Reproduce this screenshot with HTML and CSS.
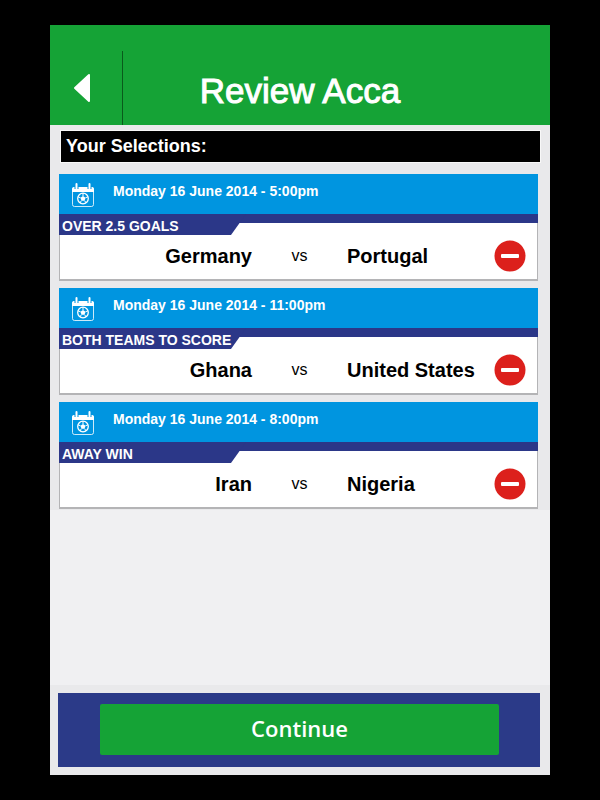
FILE: index.html
```html
<!DOCTYPE html>
<html lang="en">
<head>
    <meta charset="UTF-8">
    <meta name="viewport" content="width=device-width, initial-scale=1.0">
    <title>Review Acca</title>
    <link rel="stylesheet" href="styles.css">
</head>
<body>
    <!-- Shared icons -->
    <svg class="sprite" aria-hidden="true">
        <symbol id="icon-calendar" viewBox="0 0 24 26">
            <path d="M3 4h18a2 2 0 0 1 2 2v3H1V6a2 2 0 0 1 2-2z" fill="#fff"/>
            <rect x="1.500" y="4.500" width="21" height="19" rx="2" fill="none" stroke="#fff" stroke-opacity=".8"/>
            <path d="M5.500 1v5M18.500 1v5" stroke="#0095e0" stroke-width="4"/>
            <path d="M5.500 1v4.500M18.500 1v4.500" stroke="#fff" stroke-width="2" stroke-linecap="round"/>
            <circle cx="12" cy="15.500" r="5.300" fill="none" stroke="#fff" stroke-width="1.300"/>
            <path d="M12 13l2.500 1.800-1 2.900h-3l-1-2.900z" fill="#fff"/>
            <path d="M12 13v-3M14.500 14.800l2.500-1M13.500 17.700l1.800 2.300M10.500 17.700L8.700 20M9.500 14.800l-2.500-1" stroke="#fff" stroke-width="1"/>
        </symbol>
        <symbol id="icon-remove" viewBox="0 0 32 32">
            <circle cx="16" cy="16" r="15.500" fill="#dc201c"/>
            <rect x="7" y="14" width="18" height="4" rx="1" fill="#fff"/>
        </symbol>
    </svg>

    <div class="app">
        <header class="top-bar">
            <button type="button" class="back-btn" aria-label="Back">
                <svg width="18" height="30" viewBox="0 0 18 30"><path d="M16 2v26L2 15z" fill="#fff" stroke="#fff" stroke-width="2" stroke-linejoin="round"/></svg>
            </button>
            <h1>Review Acca</h1>
        </header>

        <main>
            <section class="selections">
                <h2>Your Selections:</h2>

                <article class="card">
                    <div class="card-date">
                        <svg class="calendar"><use href="#icon-calendar"/></svg>
                        <time datetime="2014-06-16T17:00">Monday 16 June 2014 - 5:00pm</time>
                    </div>
                    <div class="market"><span>OVER 2.5 GOALS</span></div>
                    <div class="match">
                        <span class="home">Germany</span>
                        <span class="vs">vs</span>
                        <span class="away">Portugal</span>
                        <button type="button" class="remove-btn" aria-label="Remove Germany vs Portugal"><svg><use href="#icon-remove"/></svg></button>
                    </div>
                </article>

                <article class="card">
                    <div class="card-date">
                        <svg class="calendar"><use href="#icon-calendar"/></svg>
                        <time datetime="2014-06-16T23:00">Monday 16 June 2014 - 11:00pm</time>
                    </div>
                    <div class="market"><span>BOTH TEAMS TO SCORE</span></div>
                    <div class="match">
                        <span class="home">Ghana</span>
                        <span class="vs">vs</span>
                        <span class="away">United States</span>
                        <button type="button" class="remove-btn" aria-label="Remove Ghana vs United States"><svg><use href="#icon-remove"/></svg></button>
                    </div>
                </article>

                <article class="card">
                    <div class="card-date">
                        <svg class="calendar"><use href="#icon-calendar"/></svg>
                        <time datetime="2014-06-16T20:00">Monday 16 June 2014 - 8:00pm</time>
                    </div>
                    <div class="market"><span>AWAY WIN</span></div>
                    <div class="match">
                        <span class="home">Iran</span>
                        <span class="vs">vs</span>
                        <span class="away">Nigeria</span>
                        <button type="button" class="remove-btn" aria-label="Remove Iran vs Nigeria"><svg><use href="#icon-remove"/></svg></button>
                    </div>
                </article>
            </section>
        </main>

        <footer class="bottom-bar">
            <div class="action">
                <button type="button" class="continue-btn">Continue</button>
            </div>
        </footer>
    </div>
</body>
</html>
```
FILE: styles.css
```css
* {
    margin: 0;
    padding: 0;
    box-sizing: border-box;
}

body {
    font-family: "Liberation Sans", Arial, sans-serif;
    background: #000;
    min-height: 100vh;
    display: flex;
    padding: 25px 50px;
}

button {
    border: none;
    background: none;
    cursor: pointer;
}

.sprite {
    position: absolute;
    width: 0;
    height: 0;
}

.app {
    flex: 1;
    display: flex;
    flex-direction: column;
    background: #f0f0f2;
}

/* Header */
.top-bar {
    display: grid;
    grid-template-columns: 73px 1fr 73px;
    height: 100px;
    padding-top: 26px;
    background: #15a336;
}

.back-btn {
    display: flex;
    align-items: center;
    justify-content: center;
    border-right: 1px solid #0a5a1c;
}

.back-btn svg {
    margin-right: 8px;
}

h1 {
    color: #fff;
    font-size: 35px;
    font-weight: normal;
    line-height: 40px;
    padding-top: 20px;
    text-align: center;
    white-space: nowrap;
    -webkit-text-stroke: 1px #fff;
}

/* Selections */
main {
    flex: 1;
}

.selections {
    display: flex;
    flex-direction: column;
    gap: 7px;
    padding: 5px 12px 1px 9px;
    background: #e9e9eb;
}

h2 {
    margin: 0 -3px 4px 1px;
    padding: 0 5px;
    background: #000;
    border: 1px solid #f8f8f8;
    color: #fff;
    font-size: 18px;
    line-height: 31px;
}

.card {
    background: #fff;
    border-bottom: 2px solid #b4b4b6;
}

.card-date {
    display: flex;
    height: 40px;
    padding: 9px 12px;
    gap: 18px;
    background: #0095e0;
    color: #fff;
    font-size: 14px;
    font-weight: bold;
    line-height: 16px;
}

.calendar {
    width: 24px;
    height: 26px;
    flex: none;
}

.market {
    height: 21px;
    background:
        linear-gradient(#2b3788 9px, transparent 9px),
        linear-gradient(to left, #b4b4b6 1px, #fff 1px);
}

.market span {
    display: block;
    width: 187px;
    height: 21px;
    padding: 2px 3px;
    background: #2b3788;
    clip-path: polygon(0 0, 100% 0, 172px 100%, 0 100%);
    color: #fff;
    font-size: 14px;
    font-weight: bold;
    line-height: 20px;
    white-space: nowrap;
}

.match {
    display: grid;
    grid-template-columns: 1fr 95px 1fr 32px;
    align-items: center;
    height: 44px;
    padding: 0 11px 2px 45px;
    border: 1px solid #b4b4b6;
    border-width: 0 1px;
    color: #000;
    font-size: 20px;
    font-weight: bold;
    line-height: 24px;
    white-space: nowrap;
}

.home {
    text-align: right;
}

.vs {
    font-size: 16px;
    font-weight: normal;
    text-align: center;
}

.remove-btn,
.remove-btn svg {
    display: block;
    width: 32px;
    height: 32px;
}

/* Footer */
.bottom-bar {
    padding: 8px 10px 8px 8px;
    background: #e9e9eb;
}

.action {
    padding: 11px 41px 12px 42px;
    background: #2b3a88;
}

.continue-btn {
    display: block;
    width: 100%;
    height: 51px;
    padding-bottom: 3px;
    border-radius: 2px;
    background: #15a336;
    color: #fff;
    font-family: "Open Sans", "Noto Sans", sans-serif;
    font-size: 22px;
    font-weight: 600;
}
```
